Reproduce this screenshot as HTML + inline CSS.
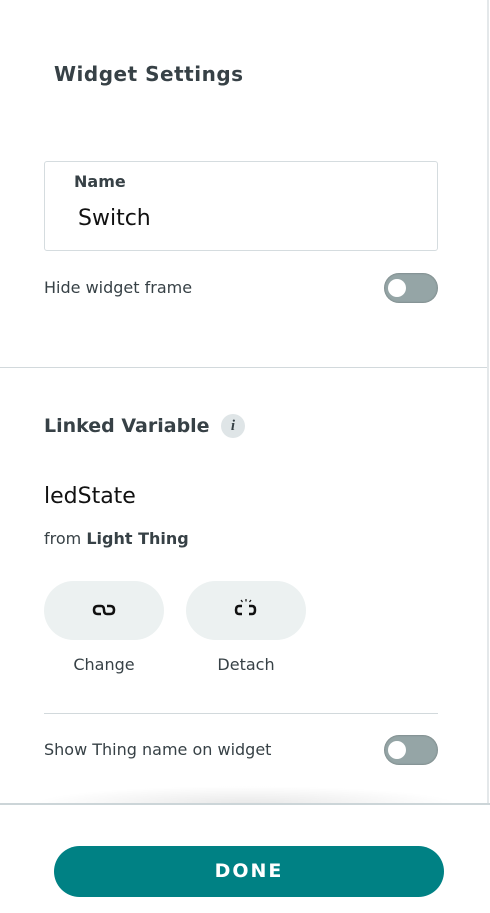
<!DOCTYPE html>
<html><head><style>
body{margin:0;width:490px;height:913px;background:#fff;font-family:"DejaVu Sans","Liberation Sans",sans-serif;color:#374146;position:relative;overflow:hidden}
.a{position:absolute;white-space:nowrap}
.tog{position:absolute;width:54px;height:30px;border-radius:15px;background:#95a5a6;box-shadow:inset 0 0 2px rgba(0,0,0,.3)}
.tog:after{content:"";position:absolute;left:4px;top:6px;width:18px;height:18px;border-radius:50%;background:#fff}
.btn{position:absolute;top:581px;width:120px;height:59px;border-radius:30px;background:#ecf1f1}
.lbl{position:absolute;top:655px;font-size:16px;color:#374146;width:120px;text-align:center}
</style></head><body>
<div class="a" style="left:487px;top:0;width:2px;height:804px;background:#e4e8ea"></div>
<div class="a" style="left:54px;top:62px;font-size:20px;font-weight:bold;letter-spacing:0.5px">Widget Settings</div>
<div class="a" style="left:44px;top:161px;width:392px;height:88px;border:1px solid #d5dcdf;border-radius:3px"></div>
<div class="a" style="left:74px;top:172px;font-size:16px;font-weight:bold">Name</div>
<div class="a" style="left:78px;top:206px;font-size:22px;color:#111">Switch</div>
<div class="a" style="left:44px;top:278px;font-size:16px">Hide widget frame</div>
<div class="tog" style="left:384px;top:273px"></div>
<div class="a" style="left:0;top:367px;width:487px;height:1px;background:#d2d9dc"></div>
<div class="a" style="left:44px;top:415px;font-size:19px;font-weight:bold">Linked Variable</div>
<div class="a" style="left:221px;top:414px;width:24px;height:24px;border-radius:50%;background:#dfe5e7;font-family:'Liberation Serif',serif;font-style:italic;font-weight:bold;font-size:15px;text-align:center;line-height:24px">i</div>
<div class="a" style="left:44px;top:484px;font-size:22px;color:#111">ledState</div>
<div class="a" style="left:44px;top:529px;font-size:16px">from <b>Light Thing</b></div>
<div class="btn" style="left:44px"></div>
<div class="btn" style="left:186px"></div>
<svg class="a" style="left:92px;top:603px" width="24" height="14" viewBox="0 0 24 14"><g fill="none" stroke="#111" stroke-width="2.5"><path d="M9 11H6Q2 11 2 7Q2 3 6 3H9Q12 3 12 7"/><path d="M15 3H18Q22 3 22 7Q22 11 18 11H15Q12 11 12 7"/></g></svg>
<svg class="a" style="left:234px;top:598px" width="24" height="20" viewBox="0 0 24 20"><g fill="none" stroke="#111" stroke-width="2.5"><path d="M8 8H5Q2 8 2 12Q2 16 5 16H8"/><path d="M15 8H18Q21 8 21 12Q21 16 18 16H15"/></g><g stroke="#111" stroke-width="1.2"><path d="M12 1V3.5M7 2L8.5 4M17 2L15.5 4"/></g></svg>
<div class="lbl" style="left:44px">Change</div>
<div class="lbl" style="left:186px">Detach</div>
<div class="a" style="left:44px;top:713px;width:394px;height:1px;background:#d2d9dc"></div>
<div class="a" style="left:44px;top:740px;font-size:16px">Show Thing name on widget</div>
<div class="tog" style="left:384px;top:735px"></div>
<div class="a" style="left:30px;top:786px;width:430px;height:18px;background:radial-gradient(ellipse at 50% 100%,rgba(0,0,0,.09),rgba(0,0,0,0) 70%)"></div>
<div class="a" style="left:0;top:803px;width:490px;height:2px;background:#ccd5d8"></div>
<div class="a" style="left:54px;top:846px;width:390px;height:51px;border-radius:26px;background:#008184;color:#fff;font-weight:bold;font-size:19px;letter-spacing:2px;text-align:center;line-height:51px">DONE</div>
</body></html>
